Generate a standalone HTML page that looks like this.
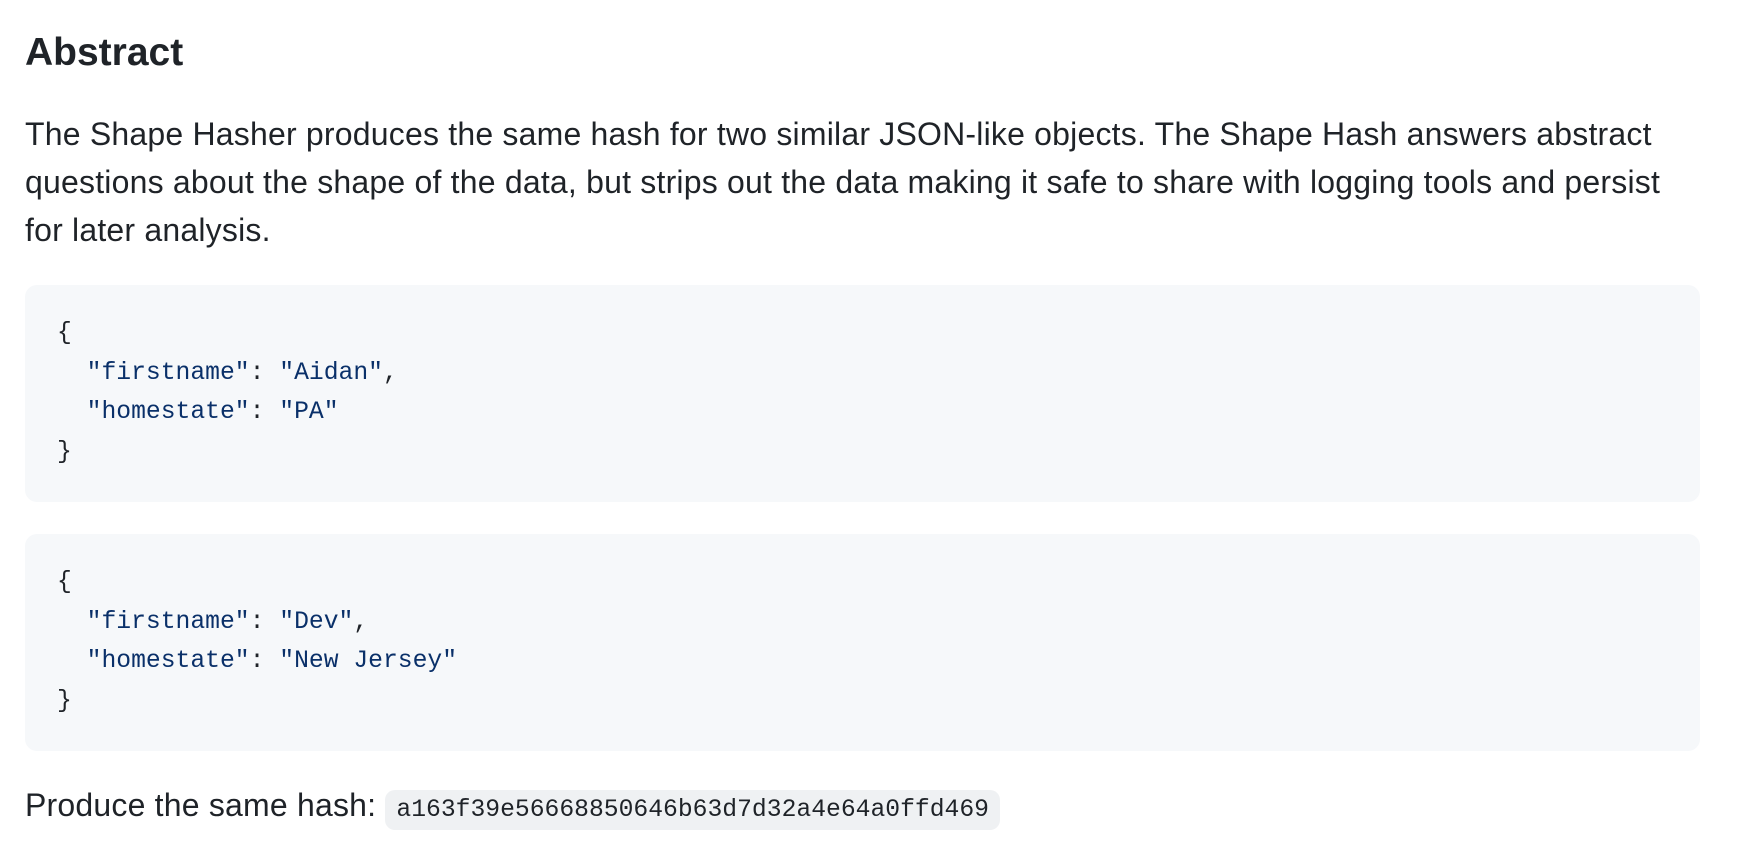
<!DOCTYPE html>
<html><head><meta charset="utf-8"><style>
html,body{margin:0;padding:0;background:#fff;width:1744px;height:842px;overflow:hidden}
body{font-family:"Liberation Sans",sans-serif;color:#1f2328;position:relative}
.h{position:absolute;left:25px;top:28px;font-size:39px;line-height:50px;font-weight:bold;margin:0}
.p{position:absolute;left:25px;top:110px;width:1680px;font-size:32px;line-height:48px;margin:0;letter-spacing:0.2px}
.pre{position:absolute;left:25px;width:1675px;box-sizing:border-box;background:#f6f8fa;border-radius:12px;padding:29px 32px;margin:0;font-family:"Liberation Mono",monospace;font-size:24.7px;line-height:39.5px;color:#1f2328;white-space:pre}
.s{color:#0a3069}
.hash{position:absolute;left:25px;top:781px;font-size:32px;line-height:48px;margin:0;white-space:nowrap;letter-spacing:0.2px}
.hash code{font-family:"Liberation Mono",monospace;font-size:24.7px;letter-spacing:0;background:#eff1f3;border-radius:10px;padding:6px 11px;margin-left:0}
</style></head><body>
<h3 class="h">Abstract</h3>
<p class="p">The Shape Hasher produces the same hash for two similar JSON-like objects. The Shape Hash answers abstract questions about the shape of the data, but strips out the data making it safe to share with logging tools and persist for later analysis.</p>
<pre class="pre" style="top:285px;height:217px">{
  <span class="s">"firstname"</span>: <span class="s">"Aidan"</span>,
  <span class="s">"homestate"</span>: <span class="s">"PA"</span>
}</pre>
<pre class="pre" style="top:534px;height:217px">{
  <span class="s">"firstname"</span>: <span class="s">"Dev"</span>,
  <span class="s">"homestate"</span>: <span class="s">"New Jersey"</span>
}</pre>
<p class="hash">Produce the same hash: <code>a163f39e56668850646b63d7d32a4e64a0ffd469</code></p>
</body></html>
